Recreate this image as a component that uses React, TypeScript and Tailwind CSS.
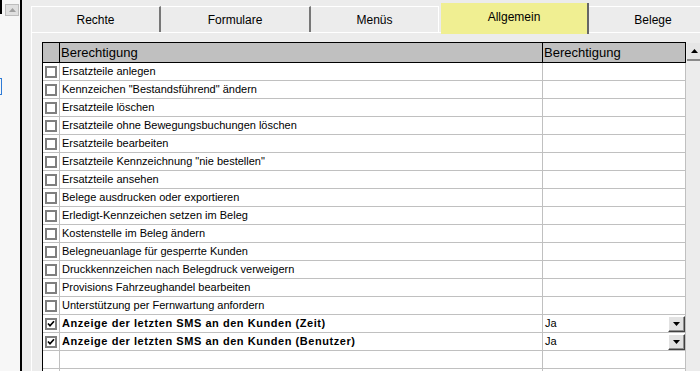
import React from 'react';

type Right = { label: string; checked?: boolean; value?: string };

const rights: Right[] = [
    { label: 'Ersatzteile anlegen' },
    { label: 'Kennzeichen "Bestandsführend" ändern' },
    { label: 'Ersatzteile löschen' },
    { label: 'Ersatzteile ohne Bewegungsbuchungen löschen' },
    { label: 'Ersatzteile bearbeiten' },
    { label: 'Ersatzteile Kennzeichnung "nie bestellen"' },
    { label: 'Ersatzteile ansehen' },
    { label: 'Belege ausdrucken oder exportieren' },
    { label: 'Erledigt-Kennzeichen setzen im Beleg' },
    { label: 'Kostenstelle im Beleg ändern' },
    { label: 'Belegneuanlage für gesperrte Kunden' },
    { label: 'Druckkennzeichen nach Belegdruck verweigern' },
    { label: 'Provisions Fahrzeughandel bearbeiten' },
    { label: 'Unterstützung per Fernwartung anfordern' },
    { label: 'Anzeige der letzten SMS an den Kunden (Zeit)', checked: true, value: 'Ja' },
    { label: 'Anzeige der letzten SMS an den Kunden (Benutzer)', checked: true, value: 'Ja' },
    { label: '' },
    { label: '' }
];

const Checkbox: React.FC<{ checked?: boolean }> = ({ checked }) => (
    <div className="w-[12px] h-[12px] border-2 border-[#7f7f7f] bg-white flex items-center justify-center">
        {checked && (
            <svg width="8" height="8" viewBox="0 0 8 8">
                <path d="M1 3.5 L3 5.8 L7 1.2" fill="none" stroke="#000" strokeWidth="1.7" />
            </svg>
        )}
    </div>
);

const DropButton: React.FC = () => (
    <div className="w-[17px] h-[16px] bg-[#e2e2e2] border border-t-white border-l-white border-b-[#404040] border-r-[#404040] shadow-[inset_-1px_-1px_0_#909090] flex items-center justify-center">
        <svg width="7" height="4" viewBox="0 0 7 4">
            <path d="M0 0 H7 L3.5 4 Z" fill="#000" />
        </svg>
    </div>
);

export default function App() {
    return (
        <div className="w-[700px] h-[371px] overflow-hidden flex bg-[#ececec] font-['Liberation_Sans',Arial,sans-serif] text-black">
            {/* left list strip */}
            <div className="relative w-[22px] h-full shrink-0 bg-[#f7f7f7] border-r-2 border-black">
                <div className="absolute left-0 top-0 w-[2px] h-[14px] border-r-2 border-b border-black" />
                <div className="absolute left-[5px] top-[4px] w-[14px] h-[12px] bg-[#e0e0e0] border border-[#bdbdbd] flex items-center justify-center">
                    <svg width="7" height="4" viewBox="0 0 7 4">
                        <path d="M0 4 H7 L3.5 0 Z" fill="#a0a0a0" />
                    </svg>
                </div>
                <div className="absolute left-0 top-[78px] w-[2px] h-[17px] border border-l-0 border-[#2f7bd6]" />
            </div>

            {/* tab control */}
            <div className="flex-1 pl-[9px] flex flex-col min-w-0">
                <div className="h-[32px] flex items-start shrink-0 text-[12px]">
                    <div className="mt-[6px] h-[26px] w-[130px] shrink-0 border-t border-l border-white border-r-2 border-r-[#777] flex items-center justify-center">
                        Rechte
                    </div>
                    <div className="mt-[6px] h-[26px] w-[150px] shrink-0 border-t border-white border-r-2 border-r-[#777] flex items-center justify-center">
                        Formulare
                    </div>
                    <div className="mt-[6px] h-[26px] w-[128px] shrink-0 border-t border-r border-white flex items-center justify-center">
                        Menüs
                    </div>
                    <div className="mt-[3px] ml-[2px] h-[31px] w-[148px] shrink-0 relative z-10 bg-[#f0ef92] border-r-2 border-r-[#666] flex items-center justify-center pb-[3px]">
                        Allgemein
                    </div>
                    <div className="mt-[6px] h-[26px] w-[128px] shrink-0 border-t border-white flex items-center justify-center">
                        Belege
                    </div>
                </div>

                <div className="flex-1 border-t border-l border-white pt-[9px] pl-[10px] flex items-start">
                    {/* grid */}
                    <div className="shrink-0 border-t border-l border-black">
                        <div className="flex h-[20px] bg-[#c0c0c0] border-b border-black text-[13px]">
                            <div className="w-[17px] border-r border-black" />
                            <div className="w-[483px] border-r border-black pl-[1px] flex items-center">Berechtigung</div>
                            <div className="w-[143px] border-r border-black pl-[1px] flex items-center">Berechtigung</div>
                        </div>
                        {rights.map((r, i) => (
                            <div key={i} className="flex h-[18px] bg-white border-b border-[#c0c0c0] text-[11px]">
                                <div className="w-[17px] border-r border-[#c0c0c0] flex items-center pl-[2px]">
                                    {r.label && <Checkbox checked={r.checked} />}
                                </div>
                                <div className={`w-[483px] border-r border-[#c0c0c0] pl-[2px] flex items-center whitespace-nowrap ${r.checked ? 'font-bold tracking-[0.55px]' : ''}`}>
                                    {r.label}
                                </div>
                                <div className="w-[143px] border-r border-[#c0c0c0] pl-[2px] flex items-center justify-between">
                                    <span>{r.value}</span>
                                    {r.value && <DropButton />}
                                </div>
                            </div>
                        ))}
                    </div>

                    {/* vertical scrollbar */}
                    <div className="w-[15px] shrink-0 pl-[1px]">
                        <div className="mt-[1px] h-[18px] w-[14px] bg-[#e6e6e6] border-b-2 border-[#8a8a8a] flex items-center justify-center">
                            <svg width="7" height="4" viewBox="0 0 7 4">
                                <path d="M0 4 H7 L3.5 0 Z" fill="#000" />
                            </svg>
                        </div>
                    </div>
                </div>
            </div>
        </div>
    );
}
